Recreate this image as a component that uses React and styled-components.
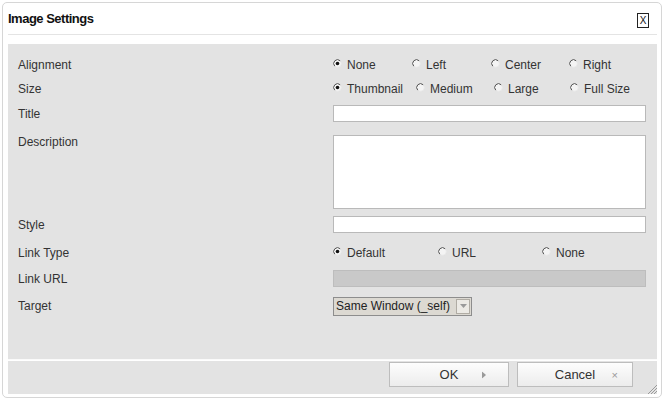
import React from 'react';
import styled, { createGlobalStyle } from 'styled-components';

const panelGrey = '#e3e3e3';
const textDark = '#2a2a2a';
const lineGrey = '#d6d6d6';

const GlobalStyle = createGlobalStyle`
  html, body {
    margin: 0;
    padding: 0;
    background: #fff;
  }
  body {
    font-family: "Liberation Sans", Arial, sans-serif;
    font-size: 12px;
    color: ${textDark};
  }
`;

const Dialog = styled.div`
  position: relative;
  box-sizing: border-box;
  width: 660px;
  height: 396px;
  margin: 2px;
  border: 1px solid ${lineGrey};
  border-radius: 5px;
  background: #fff;
  display: flex;
  flex-direction: column;
`;

const TitleBar = styled.div`
  display: flex;
  align-items: center;
  justify-content: space-between;
  height: 31px;
  margin: 0 4px 0 5px;
  padding: 0 8px 0 0;
  border-bottom: 1px solid #e4e4e4;
`;

const Title = styled.div`
  font-size: 13px;
  font-weight: bold;
  color: #111;
  letter-spacing: -0.5px;
`;

const CloseBox = styled.div`
  box-sizing: border-box;
  width: 12px;
  height: 15px;
  margin-top: 4px;
  border: 1px solid #222;
  font-size: 10px;
  line-height: 13px;
  text-align: center;
  color: #111;
  background: #fff;
`;

const Body = styled.div`
  margin: 9px 4px 0 5px;
  background: ${panelGrey};
  height: 316px;
  box-sizing: border-box;
  padding: 12px 10px 0 10px;
  display: flex;
  flex-direction: column;
  border-bottom: 1px solid #fafafa;
`;

const Row = styled.div`
  display: grid;
  grid-template-columns: 315px 313px;
  align-items: ${(p) => (p.$top ? 'start' : 'center')};
  height: ${(p) => p.$h}px;
  margin-top: ${(p) => p.$mt || 0}px;
`;

const Label = styled.div`
  line-height: 14px;
  color: #333;
`;

const TextInput = styled.div`
  box-sizing: border-box;
  height: 17px;
  background: ${(p) => (p.$disabled ? '#c9c9c9' : '#fff')};
  border: 1px solid ${(p) => (p.$disabled ? '#bdbdbd' : '#b9b9b9')};
`;

const TextArea = styled.div`
  box-sizing: border-box;
  height: 74px;
  background: #fff;
  border: 1px solid #b9b9b9;
`;

const RadioGroup = styled.div`
  display: grid;
  grid-template-columns: ${(p) => p.$cols};
  align-items: center;
`;

const RadioItem = styled.div`
  display: flex;
  align-items: center;
  white-space: nowrap;
  color: #333;

  svg {
    flex: none;
    margin-right: 5px;
    margin-top: -4px;
  }
`;

const FakeSelect = styled.div`
  box-sizing: border-box;
  width: 139px;
  height: 19px;
  display: flex;
  align-items: center;
  justify-content: space-between;
  padding: 0 1px 0 2px;
  background: #dcd9d2;
  border: 1px solid #8d8d8d;
  color: #222;
`;

const SelectArrow = styled.div`
  box-sizing: border-box;
  width: 14px;
  height: 15px;
  display: flex;
  align-items: center;
  justify-content: center;
  background: #eceae5;
  border: 1px solid #b0aca4;
`;

const Footer = styled.div`
  margin: 1px 4px 0 5px;
  background: ${panelGrey};
  height: 32px;
  display: flex;
  justify-content: flex-end;
  align-items: flex-start;
  gap: 8px;
  padding: 1px 24px 0 0;
`;

const Button = styled.div`
  position: relative;
  box-sizing: border-box;
  width: ${(p) => p.$w}px;
  height: 25px;
  display: flex;
  align-items: center;
  justify-content: center;
  border: 1px solid #bdbdbd;
  background: linear-gradient(#fdfdfd, #ececec);
  font-size: 13px;
  color: #333;
`;

const ButtonIcon = styled.span`
  position: absolute;
  right: ${(p) => p.$r}px;
  top: 50%;
  transform: translateY(-50%);
  display: flex;
  color: #999;
  font-size: 11px;
`;

const Grip = styled.svg`
  position: absolute;
  right: 3px;
  bottom: 2px;
`;

function Radio({ checked }) {
  return (
    <svg width="9" height="9" viewBox="0 0 9 9">
      <circle cx="4.5" cy="4.5" r="3.8" fill="#f4f4f4" stroke="#e8e8e8" strokeWidth="0.8" />
      <path d="M7.2 1.8 A3.8 3.8 0 0 0 1.8 7.2" fill="none" stroke="#555" strokeWidth="1" />
      {checked && <circle cx="4.5" cy="4.5" r="1.8" fill="#111" />}
    </svg>
  );
}

function RadioSet({ cols, items, checked }) {
  return (
    <RadioGroup $cols={cols}>
      {items.map((it, i) => (
        <RadioItem key={it}>
          <Radio checked={i === checked} />
          {it}
        </RadioItem>
      ))}
    </RadioGroup>
  );
}

export default function App() {
  return (
    <>
      <GlobalStyle />
      <Dialog>
        <TitleBar>
          <Title>Image Settings</Title>
          <CloseBox>X</CloseBox>
        </TitleBar>
        <Body>
          <Row $h={18}>
            <Label>Alignment</Label>
            <RadioSet cols="79px 79px 78px auto" items={['None', 'Left', 'Center', 'Right']} checked={0} />
          </Row>
          <Row $h={18} $mt={6}>
            <Label>Size</Label>
            <RadioSet cols="83px 78px 76px auto" items={['Thumbnail', 'Medium', 'Large', 'Full Size']} checked={0} />
          </Row>
          <Row $h={19} $mt={6}>
            <Label>Title</Label>
            <TextInput />
          </Row>
          <Row $h={74} $mt={12} $top>
            <Label>Description</Label>
            <TextArea />
          </Row>
          <Row $h={19} $mt={6}>
            <Label>Style</Label>
            <TextInput />
          </Row>
          <Row $h={18} $mt={10}>
            <Label>Link Type</Label>
            <RadioSet cols="105px 104px auto" items={['Default', 'URL', 'None']} checked={0} />
          </Row>
          <Row $h={19} $mt={7}>
            <Label>Link URL</Label>
            <TextInput $disabled />
          </Row>
          <Row $h={20} $mt={8}>
            <Label>Target</Label>
            <FakeSelect>
              <span>Same Window (_self)</span>
              <SelectArrow>
                <svg width="7" height="4" viewBox="0 0 7 4">
                  <path d="M0 0 L7 0 L3.5 4 Z" fill="#9a9a9a" />
                </svg>
              </SelectArrow>
            </FakeSelect>
          </Row>
        </Body>
        <Footer>
          <Button $w={120}>
            OK
            <ButtonIcon $r={22}>
              <svg width="4" height="7" viewBox="0 0 4 7">
                <path d="M0 0 L4 3.5 L0 7 Z" fill="#9a9a9a" />
              </svg>
            </ButtonIcon>
          </Button>
          <Button $w={116}>
            Cancel
            <ButtonIcon $r={14}>×</ButtonIcon>
          </Button>
        </Footer>
        <Grip width="12" height="12" viewBox="0 0 12 12">
          <path d="M11 2 L2 11 M11 5 L5 11 M11 8 L8 11" stroke="#9a9a9a" strokeWidth="1" />
        </Grip>
      </Dialog>
    </>
  );
}
